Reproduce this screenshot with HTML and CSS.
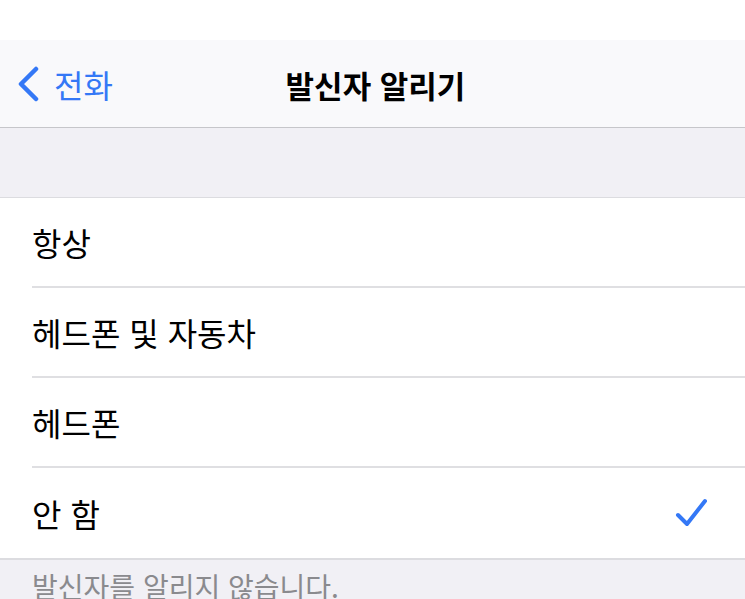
FILE: index.html
```html
<!DOCTYPE html>
<html lang="ko">
<head>
<meta charset="utf-8">
<link rel="stylesheet" href="styles.css">
</head>
<body>
<div class="status"></div>
<header class="nav">
  <div class="back">
    <svg class="chev" width="26" height="36" viewBox="0 0 26 36"><path d="M20 3 L5 18 L20 33" fill="none" stroke="#3478f6" stroke-width="4.5" stroke-linecap="round" stroke-linejoin="round"/></svg>
    <span class="back-label">전화</span>
  </div>
  <h1 class="title">발신자 알리기</h1>
</header>
<div class="gap"></div>
<ul class="list">
  <li class="row"><span class="label">항상</span></li>
  <li class="row"><span class="label">헤드폰 및 자동차</span></li>
  <li class="row"><span class="label">헤드폰</span></li>
  <li class="row"><span class="label">안 함</span>
    <svg class="check" width="34" height="32" viewBox="0 0 34 32"><path d="M3 18 L12 27 L30 4" fill="none" stroke="#3478f6" stroke-width="4" stroke-linecap="round" stroke-linejoin="round"/></svg>
  </li>
</ul>
<p class="footer">발신자를 알리지 않습니다.</p>
</body>
</html>
```
FILE: styles.css
```css
* { box-sizing: border-box; }
html, body { margin: 0; padding: 0; }
body {
  width: 745px;
  height: 599px;
  overflow: hidden;
  background: #f1f0f5;
  font-family: "Noto Sans CJK KR", "Noto Sans", sans-serif;
  color: #000;
}
.status { height: 40px; background: #fff; }
.nav {
  position: relative;
  height: 88px;
  background: #f9f9fb;
  border-bottom: 1.5px solid #c6c6ca;
  display: flex;
  align-items: center;
}
.back {
  display: flex;
  align-items: center;
  gap: 12px;
  padding-left: 16px;
  color: #3478f6;
}
.back-label { font-size: 32px; }
.title {
  position: absolute;
  left: 0; right: 0;
  top: 50%;
  transform: translateY(-50%);
  margin: 0;
  text-align: center;
  font-size: 31px;
  font-weight: 600;
  padding-left: 6px;
}
.gap { height: 69px; }
.list {
  list-style: none;
  margin: 0;
  padding: 0 0 0 32px;
  background: #fff;
  border-top: 1px solid #dcdce0;
  border-bottom: 2px solid #dcdce0;
}
.row {
  height: 90px;
  display: flex;
  align-items: center;
  justify-content: space-between;
  padding-right: 36px;
  border-bottom: 2px solid #dfdfe2;
}
.row:last-child { border-bottom: none; }
.label { font-size: 32px; }
.footer {
  margin: 0;
  padding: 6px 0 0 32px;
  font-size: 28px;
  color: #8a8a8e;
  white-space: nowrap;
}
```
